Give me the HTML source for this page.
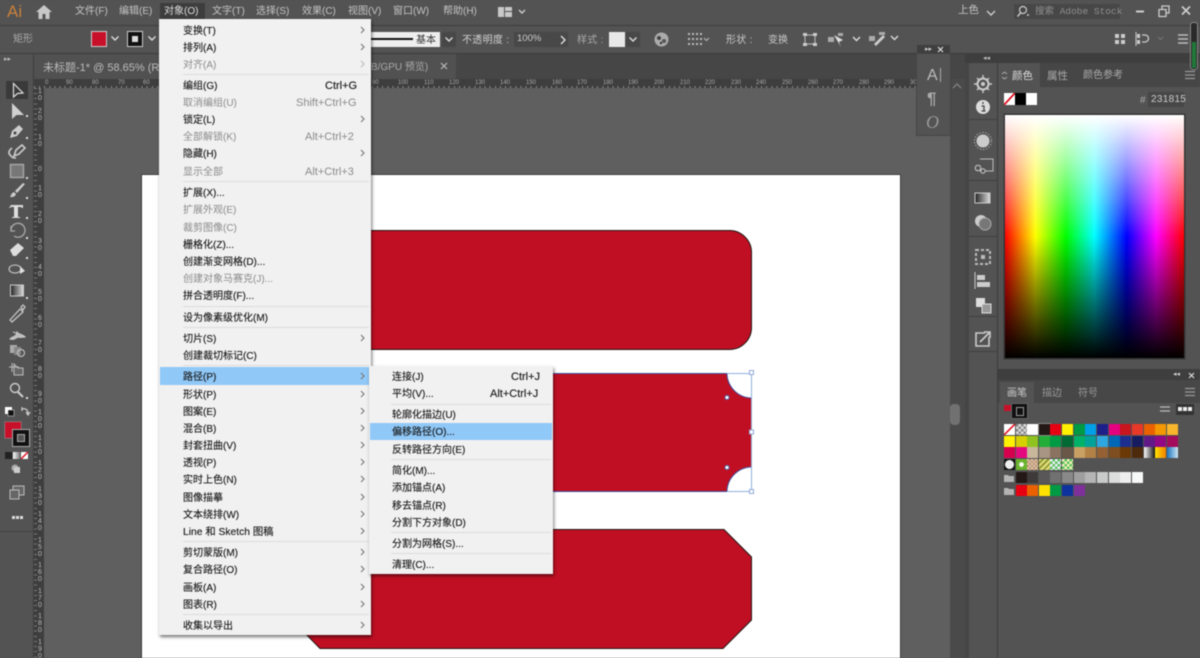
<!DOCTYPE html>
<html lang="zh"><head><meta charset="utf-8"><title>Illustrator</title>
<style>
html,body{margin:0;padding:0;width:1200px;height:658px;overflow:hidden;background:#535353}
#r{position:relative;width:1200px;height:658px;overflow:hidden;font:10px/16px "Liberation Sans","Noto Sans CJK SC",sans-serif;color:#c4c4c4;filter:blur(.4px)}
#r div,#r span,#r svg{position:absolute}
#r span{white-space:nowrap;height:16px}
.m span{color:#1a1a1a;transform:translateY(2px);text-shadow:0 0 .4px rgba(0,0,0,.6)}
.m span.d{color:#8a8a8a;text-shadow:none}
.m span.k{font-size:11px;transform:translateY(1px)}
.h span{font-size:6px;line-height:8px;height:8px;color:#aaa;top:0}
.v span{font-size:7px;line-height:7px;height:14px;width:6px;left:2px;color:#bbb;white-space:normal;text-align:center}
.sep{background:#dcdcdc;height:1px}
.sw div{width:10.5px;height:10.5px}
</style></head><body><div id="r">

<!-- canvas -->
<div style="left:44px;top:88px;width:906px;height:570px;background:#5f5f5f"></div>
<div style="left:142px;top:175px;width:758px;height:483px;background:#fff;box-shadow:0 0 0 1px #3c3c3c"></div>
<svg style="left:0;top:0" width="1200" height="658" viewBox="0 0 1200 658">
<path d="M300 230.500H729a22 22 0 0 1 22.500 22.500V327a22 22 0 0 1-22.500 22.500H300Z" fill="#c00f23" stroke="#231815"/>
<path d="M300 373.500H727a25 25 0 0 0 24.500 24.500V467a25 25 0 0 0-24.500 24.500H300Z" fill="#c00f23" stroke="#3d4f9e"/>
<path d="M297 529.500H724L751.500 557V620L723 648.500H320L297 625Z" fill="#c00f23" stroke="#231815"/>
<path d="M727 373.500H751.500V491.500H727" fill="none" stroke="#8fb0dc"/>
<g fill="#fff" stroke="#8fa9d8"><rect x="749.500" y="370.500" width="4" height="4"/><rect x="749.500" y="430" width="4" height="4"/><rect x="749.500" y="489.500" width="4" height="4"/></g>
<g fill="#fff" stroke="#4a6fb5"><circle cx="727" cy="397.500" r="2"/><circle cx="727" cy="467.500" r="2"/></g>
</svg>

<!-- top bars -->
<div style="left:0;top:0;width:1200px;height:25px;background:#535353"></div>
<div style="left:0;top:25px;width:1200px;height:1px;background:#3f3f3f"></div>
<div style="left:0;top:26px;width:1200px;height:27px;background:#535353"></div>
<div style="left:0;top:53px;width:1200px;height:1px;background:#3c3c3c"></div>
<span style="left:7px;top:3px;font-size:17px;line-height:18px;height:18px;color:#c8803a">Ai</span>
<svg style="left:36px;top:5px" width="16" height="14" viewBox="0 0 16 14"><path d="M8 0 0 7h2.500v7H6.500V9h3v5h4V7H16Z" fill="#c8c8c8"/></svg>
<div style="left:160px;top:3px;width:45px;height:16px;background:#3d3d3d"></div>
<span style="left:75px;top:4px">文件(F)</span><span style="left:119px;top:4px">编辑(E)</span><span style="left:164px;top:4px;color:#ddd">对象(O)</span><span style="left:212px;top:4px">文字(T)</span><span style="left:256px;top:4px">选择(S)</span><span style="left:302px;top:4px">效果(C)</span><span style="left:348px;top:4px">视图(V)</span><span style="left:393px;top:4px">窗口(W)</span><span style="left:443px;top:4px">帮助(H)</span>
<svg style="left:497px;top:6px" width="32" height="12" viewBox="0 0 32 12"><path d="M1 1h6v10H1ZM8 1h7v4H8ZM8 6h7v5H8Z" fill="#c8c8c8"/><path d="M22 4l3 3 3-3" fill="none" stroke="#ccc" stroke-width="1.400"/></svg>
<span style="left:958px;top:2px;font-size:10.500px">上色</span>
<svg style="left:986px;top:9px" width="10" height="8"><path d="M1 2l4 4 4-4" fill="none" stroke="#ccc" stroke-width="1.400"/></svg>
<div style="left:1014px;top:4px;width:106px;height:15px;background:#474747"></div>
<svg style="left:1016px;top:5px" width="14" height="13" viewBox="0 0 14 13"><circle cx="7" cy="5" r="3.500" fill="none" stroke="#ccc" stroke-width="1.200"/><path d="M4.500 8 1.500 11.500M11 10h2" stroke="#ccc" stroke-width="1.400"/></svg>
<span style="left:1035px;top:4px;font-size:9.500px;color:#8f8f8f;font-family:'Liberation Mono','Noto Sans CJK SC',monospace">搜索 Adobe Stock</span>
<svg style="left:1130px;top:3px" width="66" height="16" viewBox="0 0 66 16"><path d="M6 8.500h8" stroke="#ccc" stroke-width="2"/><path d="M29 6.500h7v7h-7ZM32 6V3h7v7h-3" fill="none" stroke="#ccc" stroke-width="1.300"/><path d="M52 3.500l8 8M60 3.500l-8 8" stroke="#ccc" stroke-width="1.800"/></svg>

<!-- control bar -->
<span style="left:13px;top:32px;color:#aaa">矩形</span>
<div style="left:91px;top:31px;width:14px;height:14px;background:#c9102a;border:1px solid #ccc"></div>
<svg style="left:110px;top:35px" width="10" height="8"><path d="M1.500 1.500l3.500 3.500 3.500-3.500" fill="none" stroke="#ddd" stroke-width="1.400"/></svg>
<div style="left:127px;top:31px;width:14px;height:14px;background:#111;border:1px solid #ccc"></div>
<div style="left:132px;top:36px;width:6px;height:6px;background:#ddd"></div>
<svg style="left:147px;top:35px" width="10" height="8"><path d="M1.500 1.500l3.500 3.500 3.500-3.500" fill="none" stroke="#ddd" stroke-width="1.400"/></svg>
<div style="left:371px;top:32px;width:69px;height:15px;background:#eee"></div>
<div style="left:371px;top:38px;width:42px;height:2px;background:#111"></div>
<span style="left:416px;top:33px;font-size:10px;color:#333">基本</span>
<div style="left:442px;top:32px;width:14px;height:15px;background:#474747"></div>
<svg style="left:444px;top:36px" width="10" height="8"><path d="M1.500 1.500l3.500 3.500 3.500-3.500" fill="none" stroke="#ddd" stroke-width="1.400"/></svg>
<span style="left:462px;top:33px;color:#d0d0d0;letter-spacing:.3px">不透明度 :</span>
<div style="left:514px;top:32px;width:54px;height:15px;background:#484848"></div>
<span style="left:517px;top:31px;font-size:9.500px;color:#ccc">100%</span>
<svg style="left:558px;top:35px" width="10" height="10"><path d="M3 1l4 4-4 4" fill="none" stroke="#ddd" stroke-width="1.400"/></svg>
<span style="left:577px;top:33px;color:#aaa;letter-spacing:.3px">样式 :</span>
<div style="left:609px;top:32px;width:16px;height:15px;background:#e8e8e8"></div>
<div style="left:626px;top:32px;width:14px;height:15px;background:#484848"></div>
<svg style="left:628px;top:36px" width="10" height="8"><path d="M1.500 1.500l3.500 3.500 3.500-3.500" fill="none" stroke="#ddd" stroke-width="1.400"/></svg>
<svg style="left:654px;top:32px" width="15" height="15"><circle cx="7.500" cy="7.500" r="7" fill="#ababab"/><circle cx="5" cy="6" r="2" fill="#444"/><circle cx="10" cy="9" r="2" fill="#555"/><circle cx="7" cy="11" r="1.200" fill="#333"/></svg>
<svg style="left:688px;top:32px" width="22" height="14" viewBox="0 0 22 14" fill="#bbb"><path d="M0 1h2v2H0ZM4 1h2v2H4ZM8 1h2v2H8ZM12 1h2v2h-2ZM0 6h2v2H0ZM4 6h2v2H4ZM8 6h2v2H8ZM12 6h2v2h-2ZM0 11h2v2H0ZM4 11h2v2H4ZM8 11h2v2H8ZM12 11h2v2h-2Z"/><path d="M16 6l2.500 2.500L21 6" fill="none" stroke="#bbb"/></svg>
<span style="left:726px;top:33px;color:#c8c8c8;letter-spacing:.3px">形状 :</span>
<span style="left:768px;top:33px;color:#c8c8c8">变换</span>
<svg style="left:802px;top:32px" width="16" height="15" viewBox="0 0 16 15"><path d="M3 3h10v9H3Z" fill="none" stroke="#bbb"/><path d="M1 1h4v3H1ZM11 1h4v3h-4ZM1 11h4v3H1ZM11 11h4v3h-4Z" fill="#ccc"/></svg>
<svg style="left:828px;top:32px" width="38" height="15" viewBox="0 0 38 15"><path d="M0 5h6v5H0ZM10 1h5v3h-5Z" fill="#aaa"/><path d="M6 3 15 8 11 10 13 15Z" fill="#ddd"/><path d="M25 5l3.500 3.500L32 5" fill="none" stroke="#ddd" stroke-width="1.400"/></svg>
<svg style="left:869px;top:31px" width="36" height="16" viewBox="0 0 36 16"><path d="M0 5h6v5H0ZM10 1h6v3h-6Z" fill="#aaa"/><path d="M5 13 14 4l2 2-9 9Z" fill="#ccc"/><path d="M22 5l3.500 3.500L29 5" fill="none" stroke="#ddd" stroke-width="1.400"/></svg>
<svg style="left:1113px;top:32px" width="14" height="14"><path d="M2 2h4v4H2ZM8 2h4v4H8ZM2 8h4v4H2ZM8 8h4v4H8Z" fill="#ccc"/></svg>
<svg style="left:1135px;top:32px" width="30" height="14" viewBox="0 0 30 14"><path d="M1 0v14" stroke="#ccc" stroke-width="1"/><path d="M2 2h3v4H2ZM2 8h3v4H2Z" fill="#ccc"/><path d="M7 3h3a3.500 3.500 0 0 1 0 7H7" fill="none" stroke="#ccc" stroke-width="1.300"/><path d="M23 5l2.500 2.500L28 5" fill="none" stroke="#777"/></svg>
<svg style="left:1176px;top:33px" width="13" height="12"><path d="M2 2h10M2 6h10M2 10h10" stroke="#bbb" stroke-width="1.500"/></svg>

<!-- tab row -->
<div style="left:34px;top:54px;width:931px;height:25px;background:#464646"></div>
<div style="left:34px;top:54px;width:422px;height:25px;background:#515151"></div>
<span style="left:43px;top:60px;color:#bbb;font-size:11px">未标题-1* @ 58.65% (RG</span>
<span style="left:371px;top:60px;color:#aaa;font-size:10px">B/GPU 预览)</span>
<svg style="left:439px;top:61px" width="10" height="10"><path d="M2 2l6 6M8 2l-6 6" stroke="#bbb" stroke-width="1.200"/></svg>

<!-- horizontal ruler -->
<div style="left:34px;top:79px;width:883px;height:9px;background:#3e3e3e repeating-linear-gradient(90deg,#888 0 1px,transparent 1px 5.120px) 0 7px/100% 2px no-repeat"></div>
<div class="h" style="left:0;top:79px;width:917px;height:9px">
<span style="left:45px">0</span><span style="left:66px">90</span><span style="left:92px">80</span><span style="left:118px">70</span><span style="left:143px">60</span><span style="left:372px">90</span><span style="left:398px">100</span><span style="left:424px">110</span><span style="left:449px">120</span><span style="left:475px">130</span><span style="left:500px">140</span><span style="left:526px">150</span><span style="left:552px">160</span><span style="left:577px">170</span><span style="left:603px">180</span><span style="left:628px">190</span><span style="left:654px">200</span><span style="left:680px">210</span><span style="left:705px">220</span><span style="left:731px">230</span><span style="left:756px">240</span><span style="left:782px">250</span><span style="left:808px">260</span><span style="left:833px">270</span><span style="left:859px">280</span><span style="left:884px">290</span><span style="left:910px">300</span>
</div>

<!-- vertical ruler -->
<div style="left:34px;top:88px;width:10px;height:570px;background:#3e3e3e"></div>
<div style="left:34px;top:88px;width:3px;height:570px;background:repeating-linear-gradient(180deg,#777 0 1px,transparent 1px 5.120px)"></div>
<div class="v" style="left:35px;top:0;width:9px;height:658px">
<span style="top:88px">1<br>0</span><span style="top:108px">2<br>0</span><span style="top:134px">1<br>0</span><span style="top:166px">0</span><span style="top:185px">1<br>0</span><span style="top:211px">2<br>0</span><span style="top:238px">3<br>0</span><span style="top:264px">4<br>0</span><span style="top:289px">5<br>0</span><span style="top:315px">6<br>0</span><span style="top:340px">7<br>0</span><span style="top:366px">8<br>0</span><span style="top:391px">9<br>0</span><span style="top:409px">1<br>0<br>0</span><span style="top:435px">1<br>1<br>0</span><span style="top:460px">1<br>2<br>0</span><span style="top:486px">1<br>3<br>0</span><span style="top:511px">1<br>4<br>0</span><span style="top:537px">1<br>5<br>0</span><span style="top:562px">1<br>6<br>0</span><span style="top:588px">1<br>7<br>0</span><span style="top:613px">1<br>8<br>0</span><span style="top:639px">1<br>9<br>0</span>
</div>

<!-- left toolbar -->
<div style="left:0;top:54px;width:34px;height:604px;background:#535353"></div>
<div style="left:33px;top:54px;width:1px;height:604px;background:#3e3e3e"></div>
<div style="left:4px;top:57px;font-size:7px;line-height:6px;color:#bbb">▸▸</div>
<div style="left:6px;top:81px;width:22px;height:18px;background:#3a3a3a"></div>
<svg style="left:0;top:80px" width="34" height="450" viewBox="0 0 34 450">
<defs><linearGradient id="g"><stop offset="0" stop-color="#222"/><stop offset="1" stop-color="#ddd"/></linearGradient></defs>
<path d="M13.500 3.500V17l4-3.500 5.500-.5Z" fill="none" stroke="#ddd" stroke-width="1.200"/>
<path d="M12 23V39l4.500-4H24Z" fill="#d0d0d0"/>
<path d="M10 58l2-7 7-6 4 4-6 7Z" fill="#ccc"/><circle cx="15" cy="53" r="1.500" fill="#444"/>
<path d="M14 76l2-6 6-5 3 3-6 6ZM12 68c-3 2-4 5-2 7s2 3 6 3" fill="none" stroke="#ccc" stroke-width="1.600"/>
<rect x="10.500" y="84.500" width="13" height="13" fill="#777" stroke="#a8a8a8" stroke-width="1.400"/>
<path d="M23 103l2 1-8 9-2-2ZM14 112l2 2c-1 3-3 3-6 3 1-1 1-4 4-5Z" fill="#ccc"/>
<path d="M11 125h12v3h-1l-1-1h-3v10h2v1h-8v-1h2v-10h-3l-1 1h-1Z" fill="#ddd"/>
<path d="M11 150a7 7 0 1 1 3 6M11 146v5h4" fill="none" stroke="#aaa" stroke-width="1.300"/>
<path d="M10 170l8-7 6 5-8 8h-3Z" fill="#ddd"/>
<ellipse cx="15" cy="189" rx="6" ry="4" fill="none" stroke="#bbb" stroke-width="1.200"/><path d="M20 186l5 5-5 3Z" fill="#ddd"/>
<rect x="10.500" y="205" width="13" height="11" fill="url(#g)" stroke="#ccc"/>
<path d="M10 240l10-11 3 3-11 10ZM21 227l2-2 2 2-2 3Z" fill="none" stroke="#ccc" stroke-width="1.200"/>
<path d="M10 259c2-3 6-1 7-7 2 3 6 2 8 5-3 0-4 1-7 0-3 2-5 3-8 2ZM13 252l3 1" fill="#bbb" stroke="#ccc"/>
<rect x="10" y="265" width="7" height="8" fill="#aaa"/><rect x="14" y="267" width="7" height="8" fill="#888"/><circle cx="21" cy="273" r="3.500" fill="none" stroke="#ccc"/>
<path d="M14 284v11h9v-7h-5Z" fill="#666" stroke="#bbb"/><path d="M9 287h10M12 283v9" stroke="#bbb"/>
<circle cx="15" cy="308" r="4.500" fill="none" stroke="#ccc" stroke-width="1.400"/><path d="M18 312l5 5" stroke="#ccc" stroke-width="2"/>
<g fill="#ddd"><rect x="26" y="35" width="2" height="2"/><rect x="26" y="57" width="2" height="2"/><rect x="26" y="97" width="2" height="2"/><rect x="26" y="117" width="2" height="2"/><rect x="26" y="137" width="2" height="2"/><rect x="26" y="157" width="2" height="2"/><rect x="26" y="177" width="2" height="2"/><rect x="26" y="217" width="2" height="2"/><rect x="26" y="317" width="2" height="2"/></g>
<rect x="5" y="327" width="7" height="7" fill="#fff"/><rect x="8" y="330" width="6" height="6" fill="#111" stroke="#ccc" stroke-width=".6"/>
<path d="M22 329c4-1 6 1 6 5M26 332l2 3 2-3M22 327v4" fill="none" stroke="#ccc" stroke-width="1.200"/>
</svg>
<div style="left:5px;top:422px;width:16px;height:16px;background:#c9102a;box-shadow:0 0 0 .5px #999"></div>
<div style="left:13px;top:430px;width:16px;height:16px;background:#111;box-shadow:0 0 0 1px #aaa"></div>
<div style="left:17px;top:434px;width:6px;height:6px;border:1px solid #aaa;background:#555"></div>
<div style="left:5px;top:452px;width:7px;height:7px;background:#222"></div>
<div style="left:13px;top:452px;width:7px;height:7px;background:linear-gradient(90deg,#fff,#777)"></div>
<svg style="left:21px;top:452px" width="7" height="7"><rect width="7" height="7" fill="#fff"/><path d="M0 7 7 0" stroke="#e01020" stroke-width="1.500"/></svg>
<svg style="left:0;top:460px" width="34" height="62" viewBox="0 0 34 62"><circle cx="15" cy="8" r="3.500" fill="#aaa"/><rect x="14" y="7" width="6" height="6" fill="#ccc"/><path d="M10 30h9v9h-9ZM13 30v-4h11v9h-5" fill="#666" stroke="#bbb"/><g fill="#ddd"><rect x="12" y="56" width="3" height="3"/><rect x="16" y="56" width="3" height="3"/><rect x="20" y="56" width="3" height="3"/></g></svg>
<div style="left:0;top:531px;width:34px;height:1px;background:#424242"></div>

<!-- floating char panel -->
<div style="left:950px;top:79px;width:15px;height:579px;background:#4a4a4a"></div>
<svg style="left:951px;top:82px" width="12" height="8"><path d="M2 6l4-4 4 4" fill="none" stroke="#888" stroke-width="1.200"/></svg>
<div style="left:950px;top:404px;width:10px;height:21px;background:#717171;border-radius:4px"></div>
<div style="left:917px;top:45px;width:33px;height:9px;background:#3f3f3f"></div>
<div style="left:917px;top:54px;width:33px;height:81px;background:#535353;box-shadow:0 0 0 1px #454545"></div>
<div style="left:925px;top:47px;font-size:7px;line-height:6px;color:#ccc">▸▸</div>
<svg style="left:936px;top:46px" width="10" height="8"><path d="M2 1l5 5M7 1 2 6" stroke="#ddd" stroke-width="1.200"/></svg>
<span style="left:927px;top:68px;font-size:16px;color:#bbb">A</span><div style="left:940px;top:68px;width:1px;height:14px;background:#aaa"></div>
<span style="left:927px;top:91px;font-size:17px;color:#aaa;font-weight:bold">¶</span>
<span style="left:926px;top:114px;font-size:18px;color:#999;font-family:'Liberation Serif',serif;font-style:italic">O</span>

<!-- right dock -->
<div style="left:965px;top:54px;width:235px;height:9px;background:#3e3e3e"></div>
<div style="left:983px;top:56px;font-size:7px;line-height:6px;color:#bbb">◂◂</div>
<div style="left:965px;top:63px;width:33px;height:595px;background:#535353"></div>
<div style="left:965px;top:63px;width:4px;height:595px;background:#454545"></div>
<div style="left:997px;top:63px;width:1px;height:595px;background:#3c3c3c"></div>
<div style="left:969px;top:180px;width:28px;height:1px;background:#414141"></div><div style="left:969px;top:119px;width:28px;height:1px;background:#414141"></div><div style="left:969px;top:236px;width:28px;height:1px;background:#414141"></div><div style="left:969px;top:316px;width:28px;height:1px;background:#414141"></div><div style="left:969px;top:351px;width:28px;height:1px;background:#414141"></div>
<svg style="left:969px;top:70px" width="28" height="290" viewBox="0 0 28 290">
<circle cx="14" cy="14" r="5.500" fill="none" stroke="#ccc" stroke-width="2"/><circle cx="14" cy="14" r="2" fill="#ccc"/><path d="M14 5v3M14 20v3M5 14h3M20 14h3M8 8l2 2M18 18l2 2M20 8l-2 2M10 18l-2 2" stroke="#ccc" stroke-width="1.400"/>
<circle cx="14" cy="37" r="7" fill="#ddd"/><path d="M14 32v2M12.500 36h2.500v5h1M12.500 41h4" stroke="#444" stroke-width="1.300" fill="none"/>
<circle cx="14" cy="71" r="6.500" fill="#ccc"/><circle cx="14" cy="71" r="8.500" fill="none" stroke="#aaa" stroke-dasharray="1.500 1.500"/>
<path d="M11 89h13v12H11" fill="none" stroke="#bbb"/><circle cx="9" cy="98" r="2.800" fill="#555" stroke="#ccc"/><circle cx="14" cy="101" r="2.200" fill="#555" stroke="#ccc"/>
<rect x="6" y="123" width="15" height="10" fill="url(#g)" stroke="#ccc"/>
<circle cx="12" cy="151" r="6" fill="#ccc"/><circle cx="16" cy="154" r="6" fill="#777" stroke="#aaa"/>
<path d="M7 180h14v14H7Z" fill="none" stroke="#bbb" stroke-dasharray="3 2" stroke-width="2"/><rect x="12" y="185" width="4" height="4" fill="#bbb"/>
<path d="M6 202v17" stroke="#ccc"/><path d="M8 205h8v5H8ZM8 212h13v5H8Z" fill="#ccc"/>
<path d="M7 228h9v9H7Z" fill="#ddd"/><path d="M13 234h9v9h-9Z" fill="#999" stroke="#ddd"/>
<path d="M16 263H7v13h13v-9" fill="none" stroke="#ccc" stroke-width="1.600"/><path d="M11 272l9-9M15 262h6v6" fill="none" stroke="#ccc" stroke-width="1.600"/>
</svg>

<!-- color panel -->
<div style="left:998px;top:63px;width:202px;height:300px;background:#535353"></div>
<div style="left:998px;top:63px;width:202px;height:24px;background:#464646"></div>
<div style="left:998px;top:63px;width:42px;height:24px;background:#535353"></div>
<span style="left:1012px;top:68px;color:#ddd;font-size:10.500px">颜色</span><span style="left:1047px;top:68px;color:#aaa;font-size:10.500px">属性</span><span style="left:1083px;top:68px;color:#aaa">颜色参考</span>
<svg style="left:1001px;top:71px" width="7" height="9"><path d="M1 3l2.500-2L6 3M1 6l2.500 2L6 6" fill="none" stroke="#aaa"/></svg>
<svg style="left:1184px;top:70px" width="12" height="10"><path d="M1 1.500h10M1 5h10M1 8.500h10" stroke="#999" stroke-width="1.200"/></svg>
<svg style="left:1004px;top:93px" width="33" height="12"><rect width="11" height="12" fill="#fff"/><path d="M0 12 11 0" stroke="#e01020" stroke-width="1.800"/><rect x="11" width="11" height="12" fill="#000"/><rect x="22" width="11" height="12" fill="#fff"/></svg>
<span style="left:1140px;top:93px;font-size:10px;color:#aaa">#</span>
<div style="left:1148px;top:92px;width:36px;height:15px;background:#474747"></div>
<span style="left:1151px;top:92px;font-size:10px;letter-spacing:.3px;color:#ccc">231815</span>
<div style="left:1005px;top:115px;width:179px;height:243px;background:linear-gradient(180deg,#fff 0%,rgba(255,255,255,0) 50%,rgba(0,0,0,0) 50%,#000 100%),linear-gradient(90deg,#f00 0%,#ff0 17%,#0f0 34%,#0ff 50%,#00f 68%,#f0f 84.500%,#f00 100%);box-shadow:0 0 0 1.500px #363636"></div>

<div style="left:998px;top:363px;width:202px;height:7px;background:#535353"></div>
<!-- swatches panel -->
<div style="left:998px;top:369px;width:202px;height:11px;background:#3e3e3e"></div>
<div style="left:1173px;top:372px;font-size:7px;line-height:6px;color:#ccc">◂◂</div>
<svg style="left:1187px;top:372px" width="10" height="8"><path d="M2 1l5 5M7 1 2 6" stroke="#ddd" stroke-width="1.200"/></svg>
<div style="left:998px;top:380px;width:202px;height:278px;background:#535353"></div>
<div style="left:998px;top:380px;width:202px;height:23px;background:#474747"></div>
<div style="left:1000px;top:382px;width:34px;height:21px;background:#535353"></div>
<span style="left:1007px;top:386px;color:#ccc">画笔</span><span style="left:1042px;top:386px;color:#999">描边</span><span style="left:1078px;top:386px;color:#999">符号</span>
<svg style="left:1184px;top:387px" width="12" height="10"><path d="M1 1.500h10M1 5h10M1 8.500h10" stroke="#999" stroke-width="1.200"/></svg>
<div style="left:1004px;top:405px;width:8px;height:6px;background:#c9102a"></div>
<div style="left:1012px;top:404px;width:15px;height:14px;background:#111;box-shadow:0 0 0 1px #666"></div>
<div style="left:1016px;top:407px;width:6px;height:7px;border:1px solid #999"></div>
<svg style="left:1160px;top:404px" width="35" height="11"><path d="M0 3h10M0 7h10" stroke="#bbb" stroke-width="1.200"/><rect x="16" y="0" width="18" height="11" fill="#333"/><path d="M18 3h4v4h-4ZM23 3h4v4h-4ZM28 3h4v4h-4Z" fill="#eee"/></svg>
<div class="sw" style="left:0;top:0;width:1200px;height:658px">
<div style="left:1004px;top:424px;background:#fff"></div>
<svg style="left:1004px;top:424px" width="11" height="11"><path d="M0 11 11 0" stroke="#e01020" stroke-width="1.600"/></svg>
<div style="left:1016px;top:424px;background:repeating-conic-gradient(#ddd 0 25%,#888 0 50%) 0 0/5px 5px"></div><div style="left:1027px;top:424px;background:#fff"></div><div style="left:1039px;top:424px;background:#231815;box-shadow:0 0 0 1px #888"></div><div style="left:1050px;top:424px;background:#e60012"></div><div style="left:1062px;top:424px;background:#fff100"></div><div style="left:1074px;top:424px;background:#009944"></div><div style="left:1085px;top:424px;background:#00a0e9"></div><div style="left:1097px;top:424px;background:#1d2088"></div><div style="left:1109px;top:424px;background:#e4007f"></div><div style="left:1120px;top:424px;background:#c9151e"></div><div style="left:1132px;top:424px;background:#e83828"></div><div style="left:1144px;top:424px;background:#eb6100"></div><div style="left:1155px;top:424px;background:#f39800"></div><div style="left:1167px;top:424px;background:#f8b62d"></div>
<div style="left:1004px;top:436px;background:#fff100"></div><div style="left:1016px;top:436px;background:#d7d000"></div><div style="left:1027px;top:436px;background:#8fc31f"></div><div style="left:1039px;top:436px;background:#22ac38"></div><div style="left:1050px;top:436px;background:#009944"></div><div style="left:1062px;top:436px;background:#006934"></div><div style="left:1074px;top:436px;background:#00b16a"></div><div style="left:1085px;top:436px;background:#00a29a"></div><div style="left:1097px;top:436px;background:#2ea7e0"></div><div style="left:1109px;top:436px;background:#0068b7"></div><div style="left:1120px;top:436px;background:#1d2f8e"></div><div style="left:1132px;top:436px;background:#171c61"></div><div style="left:1144px;top:436px;background:#601986"></div><div style="left:1155px;top:436px;background:#920783"></div><div style="left:1167px;top:436px;background:#a40b5d"></div>
<div style="left:1004px;top:447px;background:#d7004f"></div><div style="left:1016px;top:447px;background:#e5097f"></div><div style="left:1027px;top:447px;background:#c9b79c"></div><div style="left:1039px;top:447px;background:#a99583"></div><div style="left:1050px;top:447px;background:#8a7360"></div><div style="left:1062px;top:447px;background:#6a5747"></div><div style="left:1074px;top:447px;background:#c9a063"></div><div style="left:1085px;top:447px;background:#b28146"></div><div style="left:1097px;top:447px;background:#956134"></div><div style="left:1109px;top:447px;background:#7e4e20"></div><div style="left:1120px;top:447px;background:#6a3906"></div><div style="left:1132px;top:447px;background:#4c2a0b"></div><div style="left:1144px;top:447px;background:linear-gradient(90deg,#fff,#111)"></div><div style="left:1155px;top:447px;background:linear-gradient(90deg,#ffe100,#f08000)"></div><div style="left:1167px;top:447px;background:linear-gradient(90deg,#1b75bc,#cfe6f5)"></div>
<div style="left:1004px;top:459px;background:radial-gradient(circle,#eee 55%,#111 60%)"></div><div style="left:1016px;top:459px;background:radial-gradient(circle,#fff 25%,#6ab42d 35%)"></div><div style="left:1027px;top:459px;background:repeating-conic-gradient(#b98e6a 0 25%,#e0c8b0 0 50%) 0 0/4px 4px"></div><div style="left:1039px;top:459px;background:repeating-linear-gradient(135deg,#e8e07a 0 2px,#8f9a3a 2px 4px)"></div><div style="left:1050px;top:459px;background:repeating-conic-gradient(#5ac35a 0 25%,#eef 0 50%) 0 0/5px 5px"></div><div style="left:1062px;top:459px;background:repeating-conic-gradient(#5ac35a 0 25%,#f8f0c0 0 50%) 0 0/5px 5px"></div>
<div style="left:1016px;top:472px;background:#231815"></div><div style="left:1027px;top:472px;background:#3e3a39"></div><div style="left:1039px;top:472px;background:#595757"></div><div style="left:1050px;top:472px;background:#727171"></div><div style="left:1062px;top:472px;background:#898989"></div><div style="left:1074px;top:472px;background:#9f9fa0"></div><div style="left:1085px;top:472px;background:#b5b5b6"></div><div style="left:1097px;top:472px;background:#c9caca"></div><div style="left:1109px;top:472px;background:#dcdddd"></div><div style="left:1120px;top:472px;background:#efefef"></div><div style="left:1132px;top:472px;background:#f7f8f8"></div>
<div style="left:1016px;top:485px;background:#e60012"></div><div style="left:1027px;top:485px;background:#eb6100"></div><div style="left:1039px;top:485px;background:#ffe100"></div><div style="left:1050px;top:485px;background:#009944"></div><div style="left:1062px;top:485px;background:#0d319d"></div><div style="left:1074px;top:485px;background:#7f2f9a"></div>
</div>
<svg style="left:1004px;top:473px" width="11" height="24"><path d="M0 2h4l1 1h5v6H0ZM0 15h4l1 1h5v6H0Z" fill="#b4b4b4"/></svg>

<!-- green meter -->
<div style="left:1190px;top:22px;width:8px;height:48px;background:#2a2a2a;border:1px solid #888;border-radius:3px;box-sizing:border-box"></div>
<div style="left:1192px;top:42px;width:4px;height:26px;background:#1f7a3a"></div>

<!-- main menu -->
<div class="m" style="left:159px;top:19px;width:212px;height:616px;background:#f1f1f1;box-shadow:1px 2px 3px rgba(0,0,0,.55)">
<div style="left:1px;top:348px;width:210px;height:18px;background:#90c8f7"></div>
<div class="sep" style="left:24px;top:55px;width:186px"></div><div class="sep" style="left:24px;top:162px;width:186px"></div><div class="sep" style="left:24px;top:287px;width:186px"></div><div class="sep" style="left:24px;top:308px;width:186px"></div><div class="sep" style="left:24px;top:346px;width:186px"></div><div class="sep" style="left:24px;top:522px;width:186px"></div><div class="sep" style="left:24px;top:595px;width:186px"></div>
<span style="left:24px;top:3px">变换(T)</span><span style="left:24px;top:20px">排列(A)</span><span class="d" style="left:24px;top:37px">对齐(A)</span>
<span style="left:24px;top:58px">编组(G)</span><span class="k" style="left:166px;top:58px">Ctrl+G</span>
<span class="d" style="left:24px;top:75px">取消编组(U)</span><span class="d k" style="left:137px;top:75px">Shift+Ctrl+G</span>
<span style="left:24px;top:92px">锁定(L)</span>
<span class="d" style="left:24px;top:109px">全部解锁(K)</span><span class="d k" style="left:146px;top:109px">Alt+Ctrl+2</span>
<span style="left:24px;top:126px">隐藏(H)</span>
<span class="d" style="left:24px;top:144px">显示全部</span><span class="d k" style="left:146px;top:144px">Alt+Ctrl+3</span>
<span style="left:24px;top:165px">扩展(X)...</span><span class="d" style="left:24px;top:182px">扩展外观(E)</span><span class="d" style="left:24px;top:200px">裁剪图像(C)</span><span style="left:24px;top:217px">栅格化(Z)...</span><span style="left:24px;top:234px">创建渐变网格(D)...</span><span class="d" style="left:24px;top:251px">创建对象马赛克(J)...</span><span style="left:24px;top:268px">拼合透明度(F)...</span>
<span style="left:24px;top:290px">设为像素级优化(M)</span>
<span style="left:24px;top:311px">切片(S)</span><span style="left:24px;top:328px">创建裁切标记(C)</span>
<span style="left:24px;top:349px">路径(P)</span><span style="left:24px;top:367px">形状(P)</span><span style="left:24px;top:384px">图案(E)</span><span style="left:24px;top:401px">混合(B)</span><span style="left:24px;top:418px">封套扭曲(V)</span><span style="left:24px;top:435px">透视(P)</span><span style="left:24px;top:452px">实时上色(N)</span><span style="left:24px;top:470px">图像描摹</span><span style="left:24px;top:487px">文本绕排(W)</span><span style="left:24px;top:504px;font-size:10.300px">Line 和 Sketch 图稿</span>
<span style="left:24px;top:525px">剪切蒙版(M)</span><span style="left:24px;top:542px">复合路径(O)</span><span style="left:24px;top:560px">画板(A)</span><span style="left:24px;top:577px">图表(R)</span>
<span style="left:24px;top:598px">收集以导出</span>
<svg style="left:200px;top:0" width="8" height="616" viewBox="0 0 8 616" fill="none" stroke="#777" stroke-width="1.100"><path d="M2 8l3 3-3 3M2 25l3 3-3 3M2 97l3 3-3 3M2 131l3 3-3 3M2 316l3 3-3 3M2 354l3 3-3 3M2 372l3 3-3 3M2 389l3 3-3 3M2 406l3 3-3 3M2 423l3 3-3 3M2 440l3 3-3 3M2 457l3 3-3 3M2 475l3 3-3 3M2 492l3 3-3 3M2 509l3 3-3 3M2 530l3 3-3 3M2 547l3 3-3 3M2 565l3 3-3 3M2 582l3 3-3 3M2 603l3 3-3 3"/><path d="M2 42l3 3-3 3" stroke="#bbb"/></svg>
</div>

<!-- submenu -->
<div class="m" style="left:369px;top:366px;width:184px;height:208px;background:#f1f1f1;box-shadow:1px 2px 3px rgba(0,0,0,.5)">
<div style="left:1px;top:57px;width:182px;height:17px;background:#90c8f7"></div>
<div class="sep" style="left:22px;top:38px;width:160px"></div><div class="sep" style="left:22px;top:93px;width:160px"></div><div class="sep" style="left:22px;top:166px;width:160px"></div><div class="sep" style="left:22px;top:187px;width:160px"></div>
<span style="left:23px;top:2px">连接(J)</span><span class="k" style="left:142px;top:2px">Ctrl+J</span>
<span style="left:23px;top:19px">平均(V)...</span><span class="k" style="left:121px;top:19px">Alt+Ctrl+J</span>
<span style="left:23px;top:40px">轮廓化描边(U)</span><span style="left:23px;top:57px">偏移路径(O)...</span><span style="left:23px;top:75px">反转路径方向(E)</span>
<span style="left:23px;top:96px">简化(M)...</span><span style="left:23px;top:113px">添加锚点(A)</span><span style="left:23px;top:131px">移去锚点(R)</span><span style="left:23px;top:148px">分割下方对象(D)</span>
<span style="left:23px;top:169px">分割为网格(S)...</span><span style="left:23px;top:190px">清理(C)...</span>
</div>
</div></body></html>
